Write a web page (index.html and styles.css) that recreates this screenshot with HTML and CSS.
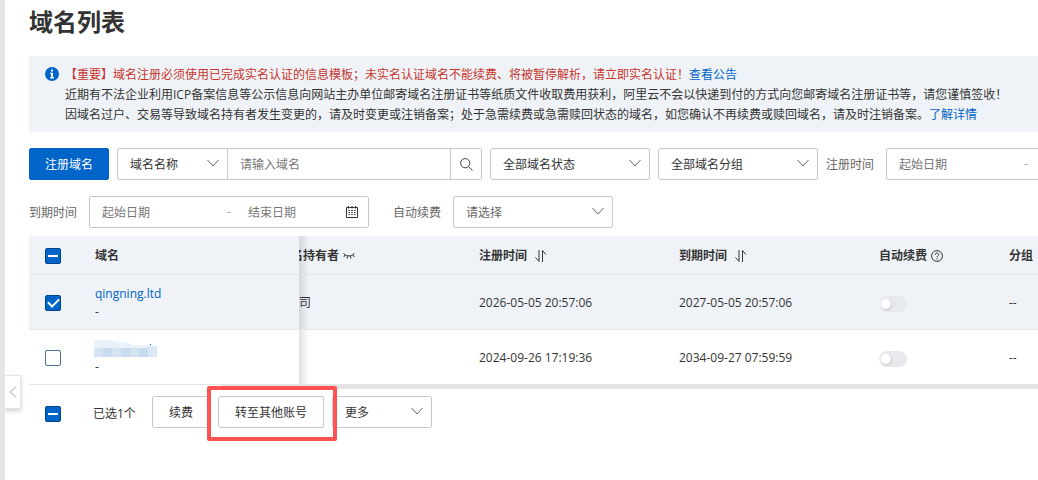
FILE: index.html
```html
<!DOCTYPE html>
<html lang="zh-CN">
<head>
    <meta charset="UTF-8">
    <meta name="viewport" content="width=device-width, initial-scale=1.0">
    <title>域名列表</title>
    <link rel="stylesheet" href="styles.css">
</head>

<body>
    <!-- shared icons -->
    <svg class="sprite" aria-hidden="true">
        <symbol id="arrow-down" viewBox="0 0 12 8"><path d="M0.5 1 L6 7 L11.5 1" /></symbol>
        <symbol id="calendar" viewBox="0 0 12 12">
            <path d="M0.5 1.5h11v10h-11z M2.5 0v2.5 M6 0v2.5 M9.5 0v2.5" />
            <path d="M2.5 4.5h1.5 M5.2 4.5h1.6 M8 4.5h1.5 M2.5 6.5h1.5 M5.2 6.5h1.6 M8 6.5h1.5 M2.5 8.5h1.5 M5.2 8.5h1.6 M8 8.5h1.5" />
        </symbol>
        <symbol id="sort" viewBox="0 0 12 14"><path d="M0.5 8.5l3.5 4V1 M7.5 13V1.5l3.5 4" /></symbol>
    </svg>

    <div class="page">
        <button class="side-toggle" aria-label="展开">
            <svg width="8" height="12" viewBox="0 0 8 12"><path d="M7.5 0.5L1 6l6.5 5.5" /></svg>
        </button>

        <main class="main">
            <h1>域名列表</h1>

            <!-- notice -->
            <div class="notice">
                <svg class="notice-icon" width="14" height="14" viewBox="0 0 14 14">
                    <circle cx="7" cy="7" r="7" fill="#0064c8" />
                    <path d="M6 2.5h2v2H6z M5 5.8h3v4.4h1v1.3H5v-1.3h1V7.1H5z" fill="#fff" />
                </svg>
                <div>
                    <p><span class="important">【重要】域名注册必须使用已完成实名认证的信息模板；未实名认证域名不能续费、将被暂停解析，请立即实名认证！</span><a href="#">查看公告</a></p>
                    <p>近期有不法企业利用ICP备案信息等公示信息向网站主办单位邮寄域名注册证书等纸质文件收取费用获利，阿里云不会以快递到付的方式向您邮寄域名注册证书等，请您谨慎签收！</p>
                    <p>因域名过户、交易等导致域名持有者发生变更的，请及时变更或注销备案；处于急需续费或急需赎回状态的域名，如您确认不再续费或赎回域名，请及时注销备案。<a href="#">了解详情</a></p>
                </div>
            </div>

            <!-- filters -->
            <div class="filters">
                <button class="btn btn-primary">注册域名</button>
                <div class="search">
                    <div class="select search-type">
                        <select aria-label="搜索类型"><option>域名名称</option></select>
                        <svg><use href="#arrow-down" /></svg>
                    </div>
                    <input type="text" placeholder="请输入域名" aria-label="域名">
                    <button class="search-btn" aria-label="搜索">
                        <svg width="13" height="13" viewBox="0 0 13 13"><circle cx="5.2" cy="5.2" r="4.6" /><path d="M8.5 8.5l4 4" /></svg>
                    </button>
                </div>
                <div class="select">
                    <select aria-label="域名状态"><option>全部域名状态</option></select>
                    <svg><use href="#arrow-down" /></svg>
                </div>
                <div class="select">
                    <select aria-label="域名分组"><option>全部域名分组</option></select>
                    <svg><use href="#arrow-down" /></svg>
                </div>
                <div class="field">
                    <label for="reg-start">注册时间</label>
                    <div class="range">
                        <input type="text" id="reg-start" placeholder="起始日期">
                        <span>-</span>
                        <input type="text" placeholder="结束日期" aria-label="注册结束日期">
                        <svg><use href="#calendar" /></svg>
                    </div>
                </div>
            </div>
            <div class="filters">
                <div class="field">
                    <label for="exp-start">到期时间</label>
                    <div class="range">
                        <input type="text" id="exp-start" placeholder="起始日期">
                        <span>-</span>
                        <input type="text" placeholder="结束日期" aria-label="到期结束日期">
                        <svg><use href="#calendar" /></svg>
                    </div>
                </div>
                <div class="field field-renew">
                    <label for="renew">自动续费</label>
                    <div class="select is-empty">
                        <select id="renew"><option>请选择</option></select>
                        <svg><use href="#arrow-down" /></svg>
                    </div>
                </div>
            </div>

            <!-- domain table -->
            <table>
                <colgroup>
                    <col class="col-check">
                    <col class="col-domain">
                    <col class="col-holder">
                    <col class="col-time">
                    <col class="col-time">
                    <col class="col-renew">
                    <col>
                </colgroup>
                <thead>
                    <tr>
                        <th class="fixed"><input type="checkbox" class="check partial" aria-label="全选"></th>
                        <th class="fixed">域名</th>
                        <th class="holder">
                            <div class="th-text scrolled">名持有者
                                <svg width="12" height="6" viewBox="0 0 12 6"><path d="M0.5 0.5q5.5 5 11 0 M2 2L0.8 4 M4.5 3L4 5.5 M7.5 3L8 5.5 M10 2l1.2 2" /></svg>
                            </div>
                        </th>
                        <th><div class="th-text th-sort">注册时间 <svg width="12" height="14"><use href="#sort" /></svg></div></th>
                        <th><div class="th-text th-sort">到期时间 <svg width="12" height="14"><use href="#sort" /></svg></div></th>
                        <th>
                            <div class="th-text">自动续费
                                <svg width="12" height="12" viewBox="0 0 12 12"><circle cx="6" cy="6" r="5.4" /><path d="M4.2 4.8c0-2.4 3.6-2.4 3.6-0.2C7.8 5.8 6 5.9 6 7.4 M6 8.4v1.2" /></svg>
                            </div>
                        </th>
                        <th>分组</th>
                    </tr>
                </thead>
                <tbody>
                    <tr class="selected">
                        <td class="fixed"><input type="checkbox" class="check" aria-label="选择 qingning.ltd" checked></td>
                        <td class="fixed"><a href="#">qingning.ltd</a><br>-</td>
                        <td class="holder">司</td>
                        <td>2026-05-05 20:57:06</td>
                        <td>2027-05-05 20:57:06</td>
                        <td><input type="checkbox" role="switch" class="switch" aria-label="自动续费" disabled></td>
                        <td>--</td>
                    </tr>
                    <tr>
                        <td class="fixed"><input type="checkbox" class="check" aria-label="选择域名"></td>
                        <td class="fixed">
                            <svg class="mosaic" width="72" height="18" viewBox="0 0 72 18">
                                <path d="M0 0h14v1H0z" fill="#f8f8f8" />
                                <path d="M8 0h16l8 2h7l8 3 24 1v3H8z" fill="#eaf1fb" />
                                <path d="M8 8h9v9H8z M26 8h9v9h-9z M44 8h9v9h-9z" fill="#d5e3f3" />
                                <path d="M17 8h9v9h-9z M35 8h9v9h-9z M53 8h9v9h-9z" fill="#c8dcf1" />
                                <path d="M62 6h9v11h-9z" fill="#dae7f4" />
                                <path d="M64 4h1v1h-1z" fill="#0064c8" />
                            </svg>
                            <br>-
                        </td>
                        <td class="holder"></td>
                        <td>2024-09-26 17:19:36</td>
                        <td>2034-09-27 07:59:59</td>
                        <td><input type="checkbox" role="switch" class="switch" aria-label="自动续费" disabled></td>
                        <td>--</td>
                    </tr>
                </tbody>
            </table>
            <div class="scrollbar"></div>

            <!-- batch actions -->
            <div class="actions">
                <div class="picked">
                    <input type="checkbox" class="check partial" id="check-all">
                    <label for="check-all">已选1个</label>
                </div>
                <button class="btn">续费</button>
                <div class="marked"><button class="btn">转至其他账号</button></div>
                <div class="select select-more">
                    <select aria-label="更多操作"><option>更多</option></select>
                    <svg><use href="#arrow-down" /></svg>
                </div>
            </div>
        </main>
    </div>
</body>
</html>
```
FILE: styles.css
```css
* {
    box-sizing: border-box;
}

body {
    margin: 0;
    background-color: #fff;
    color: #333;
    font-family: "Open Sans", "Noto Sans CJK SC", sans-serif;
    font-size: 12px;
    line-height: 18px;
}

button,
input,
select {
    font: inherit;
    color: inherit;
}

a {
    color: #0064c8;
    text-decoration: none;
}

svg {
    fill: none;
    stroke: #444;
}

.sprite {
    position: absolute;
    width: 0;
    height: 0;
}

.page {
    position: relative;
    min-height: 100vh;
    border-left: 5px solid #e5e5e5;
    overflow: hidden;
}

.main {
    padding: 6px 0 0 24px;
}

.side-toggle {
    position: absolute;
    top: 375px;
    left: 0;
    display: flex;
    align-items: center;
    justify-content: center;
    width: 16px;
    height: 34px;
    padding: 0;
    border: 1px solid #e5e5e5;
    border-left: 0;
    background-color: #fff;
    box-shadow: 0 2px 4px rgba(0, 0, 0, 0.2);
}

.side-toggle svg {
    stroke: #aaa;
}

h1 {
    margin: 0 0 18px;
    font-size: 24px;
    line-height: 32px;
}

/* notice */
.notice {
    display: flex;
    gap: 6px;
    margin-bottom: 16px;
    padding: 9px 16px 7px;
    border-radius: 2px;
    background-color: #eff3f8;
    line-height: 20px;
}

.notice p {
    margin: 0;
    white-space: nowrap;
}

.notice-icon {
    flex: none;
    margin-top: 2px;
    stroke: none;
}

.important {
    color: #c8352b;
}

/* filters */
.filters {
    display: flex;
    gap: 8px;
    margin-bottom: 16px;
}

.filters + .filters {
    margin-bottom: 8px;
}

.filters > * {
    flex: none;
}

.btn {
    height: 32px;
    padding: 1px 16px 0;
    border: 1px solid #c8c8c8;
    border-radius: 2px;
    background-color: #fff;
    white-space: nowrap;
}

.btn-primary {
    padding: 1px 15px 0;
    border-color: #0064c8;
    background-color: #0064c8;
    color: #fff;
}

.select {
    position: relative;
    width: 160px;
}

.select select {
    width: 100%;
    height: 32px;
    padding: 1px 12px 0;
    border: 1px solid #c8c8c8;
    border-radius: 2px;
    background-color: #fff;
    appearance: none;
}

.select svg {
    position: absolute;
    top: 11px;
    right: 9px;
    width: 12px;
    height: 8px;
    stroke: #666;
    pointer-events: none;
}

.is-empty select,
.field label {
    color: #666;
}

::placeholder {
    color: #777;
    opacity: 1;
}

.search {
    display: flex;
    width: 365px;
    height: 32px;
    border: 1px solid #c8c8c8;
    border-radius: 2px;
}

.search .search-type {
    flex: none;
    width: 109px;
}

.search-type select {
    height: 30px;
    border: 0;
}

.search-type svg {
    top: 10px;
    right: 8px;
}

.search input {
    flex: 1;
    min-width: 0;
    padding: 1px 12px 0;
    border: 0;
    border-left: 1px solid #c8c8c8;
}

.search-btn {
    display: flex;
    align-items: center;
    justify-content: center;
    width: 31px;
    padding: 0;
    border: 0;
    border-left: 1px solid #c8c8c8;
    background-color: #fff;
}

.field {
    display: flex;
    align-items: center;
    gap: 12px;
}

.field label {
    padding-top: 1px;
}

.field-renew {
    margin-left: 16px;
}

.range {
    display: flex;
    align-items: center;
    width: 280px;
    height: 32px;
    padding: 0 10px 0 0;
    border: 1px solid #c8c8c8;
    border-radius: 2px;
}

.range input {
    flex: 1;
    min-width: 0;
    height: 30px;
    padding: 1px 12px 0;
    border: 0;
    background-color: transparent;
}

.range input:first-child {
    flex: none;
    width: 132px;
}

.range span {
    width: 14px;
    color: #aaa;
    text-align: center;
}

.range svg {
    flex: none;
    width: 12px;
    height: 12px;
    stroke: #333;
}

/* table */
table {
    width: 100%;
    table-layout: fixed;
    border-collapse: separate;
    border-spacing: 0;
}

.col-check {
    width: 50px;
}

.col-domain {
    width: 220px;
}

.col-holder {
    width: 164px;
}

.col-time {
    width: 200px;
}

.col-renew {
    width: 130px;
}

th,
td {
    padding: 1px 0 0 16px;
    border-bottom: 1px solid #e2e4e6;
    background-color: #fff;
    text-align: left;
    white-space: nowrap;
}

th {
    height: 39px;
    background-color: #eff3f8;
}

td {
    height: 55px;
    padding-top: 2px;
}

.selected td {
    background-color: #eff3f8;
}

.fixed {
    position: sticky;
    left: 0;
    z-index: 1;
}

.holder {
    padding-left: 0;
    background-image: linear-gradient(to right, rgba(0, 0, 0, 0.12), rgba(0, 0, 0, 0) 10px);
}

.th-text {
    display: flex;
    align-items: center;
    gap: 4px;
}

.th-sort {
    gap: 8px;
}

.th-text svg {
    stroke: #333;
}

/* the column is scrolled under the fixed ones */
.scrolled {
    margin-left: -8px;
}

.mosaic {
    display: inline-block;
    margin-left: -9px;
    vertical-align: top;
    stroke: none;
}

.check {
    display: flex;
    align-items: center;
    justify-content: center;
    width: 16px;
    height: 16px;
    margin: 0;
    border: 1px solid #4a719c;
    border-radius: 2px;
    background-color: #fff;
    appearance: none;
}

.check:checked,
.partial {
    border-color: #00438a;
    background-color: #0064c8;
}

.check:checked::after {
    content: "";
    width: 9px;
    height: 5px;
    margin-bottom: 3px;
    border: solid #fff;
    border-width: 0 0 2px 2px;
    transform: rotate(-45deg);
}

.partial::after {
    content: "";
    width: 10px;
    height: 2px;
    background-color: #fff;
}

.switch {
    display: flex;
    align-items: center;
    width: 28px;
    height: 16px;
    margin: 2px 0 0;
    padding: 0 2px;
    border-radius: 8px;
    background-color: #e8e9ed;
    appearance: none;
}

.switch::after {
    content: "";
    width: 10px;
    height: 10px;
    border-radius: 50%;
    background-color: #fff;
    box-shadow: 1px 1px 2px rgba(0, 0, 0, 0.15);
}

.scrollbar {
    height: 4px;
    margin-left: 192px;
    background-color: #e3e3e3;
}

/* batch actions */
.actions {
    display: flex;
    align-items: center;
    gap: 8px;
    padding: 7px 16px;
}

.picked {
    display: flex;
    align-items: center;
    gap: 32px;
    margin-right: 8px;
    padding-top: 4px;
}

.marked {
    position: relative;
}

.marked::after {
    content: "";
    position: absolute;
    inset: -10px -13px -13px -11px;
    border: 4px solid #ff5252;
    border-radius: 2px;
    pointer-events: none;
    z-index: 1;
}

.select-more {
    width: 100px;
}
```
